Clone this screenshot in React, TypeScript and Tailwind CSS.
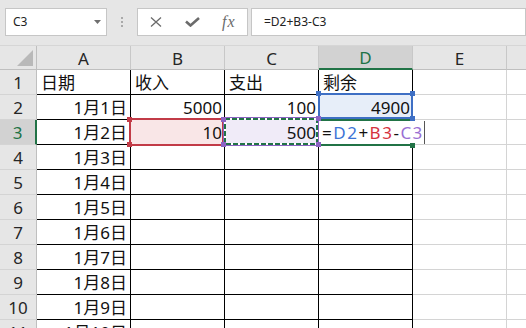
import React from 'react'
import clsx from 'clsx'

type Row = { n: number; a?: string; b?: string; c?: string; d?: string; head?: boolean }

const rows: Row[] = [
  { n: 1, a: '日期', b: '收入', c: '支出', d: '剩余', head: true },
  { n: 2, a: '1月1日', b: '5000', c: '100', d: '4900' },
  { n: 3, a: '1月2日', b: '10', c: '500' },
  { n: 4, a: '1月3日' },
  { n: 5, a: '1月4日' },
  { n: 6, a: '1月5日' },
  { n: 7, a: '1月6日' },
  { n: 8, a: '1月7日' },
  { n: 9, a: '1月8日' },
  { n: 10, a: '1月9日' },
  { n: 11, a: '1月10日' },
]

const cols = ['A', 'B', 'C', 'D', 'E']

function Formula() {
  return (
    <span className="tracking-[1.5px] whitespace-nowrap">
      =<span className="text-[#3c74d6]">D2</span>+<span className="text-[#d5333f]">B3</span>-
      <span className="text-[#9a6fd3]">C3</span>
      <span className="inline-block w-px h-[23px] bg-[#555] align-bottom" />
    </span>
  )
}

function SheetRow({ row }: { row: Row }) {
  const active = row.n === 3
  const cell = 'w-[94px] shrink-0 h-[25px] flex items-end leading-[22px] border-r border-b whitespace-nowrap'
  const black = 'border-r-black border-b-black'
  return (
    <div className="flex h-[25px]">
      <div
        className={clsx(
          'w-[37px] shrink-0 flex items-end justify-center leading-[22px] border-b border-b-[#d4d4d4]',
          active
            ? 'bg-[#d2d2d2] text-[#217346] border-r-2 border-r-[#217346]'
            : 'bg-[#e6e6e6] text-[#262626] border-r border-r-[#bfbfbf]'
        )}
      >
        {row.n}
      </div>
      <div className={clsx(cell, black, row.head ? 'pl-[4px]' : 'justify-end pr-[3px]')}>{row.a}</div>
      <div
        className={clsx(cell, black, row.head ? 'pl-[4px]' : 'justify-end pr-[2px]', active && 'bg-[#f9e6e7]')}
      >
        {row.b}
      </div>
      <div
        className={clsx(cell, black, row.head ? 'pl-[4px]' : 'justify-end pr-[2px]', active && 'bg-[#f0ebf8]')}
      >
        {row.c}
      </div>
      <div
        className={clsx(
          cell,
          active ? 'border-r-white border-b-black bg-white pl-[3px] overflow-visible' : black,
          row.head ? 'pl-[4px]' : !active && 'justify-end pr-[2px]',
          row.n === 2 && 'bg-[#e7eef9]'
        )}
      >
        {active ? <Formula /> : row.d}
      </div>
      <div className={clsx(cell, 'border-r-[#d4d4d4] border-b-[#d4d4d4]')} />
      <div className="flex-1 h-[25px] border-b border-b-[#d4d4d4]" />
    </div>
  )
}

export default function App() {
  return (
    <div className="relative w-[526px] h-[328px] overflow-hidden bg-white text-[#111]">
      {/* formula bar */}
      <div className="flex items-start h-[46px] pt-[8px] pl-[5px] bg-[#e6e6e6] border-b border-b-[#d6d6d6] font-['Noto_Sans',sans-serif] text-[12px] text-[#222]">
        <div className="w-[102px] h-[28px] shrink-0 flex items-center justify-between bg-white border border-[#c6c6c6] pl-[7px] pr-[5px]">
          <span>C3</span>
          <svg width="7" height="4" viewBox="0 0 7 4">
            <path d="M0 0H7L3.5 4Z" fill="#6f6f6f" />
          </svg>
        </div>
        <div className="w-[30px] h-[28px] shrink-0 flex flex-col items-center justify-center gap-[2px]">
          <span className="w-[2px] h-[2px] bg-[#a9a9a9]" />
          <span className="w-[2px] h-[2px] bg-[#a9a9a9]" />
          <span className="w-[2px] h-[2px] bg-[#a9a9a9]" />
        </div>
        <div className="w-[111px] h-[28px] shrink-0 grid grid-cols-3 place-items-center bg-white border border-[#c6c6c6]">
          <svg width="12" height="10" viewBox="0 0 12 10">
            <path d="M1 0.5L11 9.5M11 0.5L1 9.5" stroke="#6b6b6b" strokeWidth="1.3" fill="none" />
          </svg>
          <svg width="15" height="10" viewBox="0 0 15 10">
            <path d="M1 4.5L5.5 8.5L14 1" stroke="#6b6b6b" strokeWidth="2.6" fill="none" />
          </svg>
          <span className="font-['Liberation_Serif',serif] italic text-[16px] tracking-[1px] text-[#6b6b6b] leading-none">
            fx
          </span>
        </div>
        <div className="ml-[3px] flex-1 h-[28px] flex items-center bg-white border border-[#c6c6c6] pl-[12px]">
          =D2+B3-C3
        </div>
      </div>

      {/* sheet */}
      <div className="font-['Noto_Sans','Noto_Sans_CJK_SC',sans-serif] text-[17px]">
        <div className="flex h-[24px] bg-[#e6e6e6] text-[#262626]">
          <div className="w-[37px] shrink-0 flex items-end justify-end pr-[2px] pb-[2px] border-r border-b border-r-[#bfbfbf] border-b-[#bfbfbf]">
            <svg width="17" height="17" viewBox="0 0 17 17">
              <path d="M16 0V16H0Z" fill="#b9b9b9" />
            </svg>
          </div>
          {cols.map((c) => (
            <div
              key={c}
              className={clsx(
                'w-[94px] shrink-0 flex items-center justify-center pt-[2px] border-r border-r-[#c8c8c8]',
                c === 'D'
                  ? 'bg-[#d2d2d2] text-[#217346] border-b-2 border-b-[#217346]'
                  : 'border-b border-b-[#bfbfbf]'
              )}
            >
              {c}
            </div>
          ))}
          <div className="flex-1 border-b border-b-[#bfbfbf]" />
        </div>
        {rows.map((r) => (
          <SheetRow key={r.n} row={r} />
        ))}
      </div>

      {/* reference frames */}
      <div className="absolute left-[318px] top-[119px] w-[95px] h-[27px] border-t-2 border-b-2 border-[#217346]" />
      <div className="absolute left-[318px] top-[93px] w-[95px] h-[26px] border-2 border-[#3e6fc4]" />
      <div className="absolute left-[129px] top-[118px] w-[95px] h-[28px] border-2 border-[#c23b47]" />
      <svg className="absolute left-[223px] top-[117px]" width="96" height="29" viewBox="0 0 96 29">
        <rect x="0.5" y="0.5" width="95" height="28" fill="none" stroke="#8c63c2" />
        <rect x="2" y="2" width="92" height="25" fill="none" stroke="#fff" strokeWidth="2" />
        <rect x="2" y="2" width="92" height="25" fill="none" stroke="#217346" strokeWidth="2" strokeDasharray="5 2" />
      </svg>

      {/* handles */}
      <div className="absolute left-[316px] top-[91px] w-[5px] h-[5px] bg-[#3e6fc4]" />
      <div className="absolute left-[410px] top-[91px] w-[5px] h-[5px] bg-[#3e6fc4]" />
      <div className="absolute left-[410px] top-[116px] w-[5px] h-[5px] bg-[#3e6fc4]" />
      <div className="absolute left-[316px] top-[116px] w-[5px] h-[5px] bg-[#8c63c2]" />
      <div className="absolute left-[127px] top-[117px] w-[5px] h-[5px] bg-[#c23b47]" />
      <div className="absolute left-[127px] top-[142px] w-[5px] h-[5px] bg-[#c23b47]" />
      <div className="absolute left-[221px] top-[117px] w-[5px] h-[5px] bg-[#8c63c2]" />
      <div className="absolute left-[221px] top-[142px] w-[5px] h-[5px] bg-[#8c63c2]" />
      <div className="absolute left-[316px] top-[142px] w-[5px] h-[5px] bg-[#8c63c2]" />
      <div className="absolute left-[410px] top-[143px] w-[5px] h-[5px] bg-[#217346]" />
    </div>
  )
}
